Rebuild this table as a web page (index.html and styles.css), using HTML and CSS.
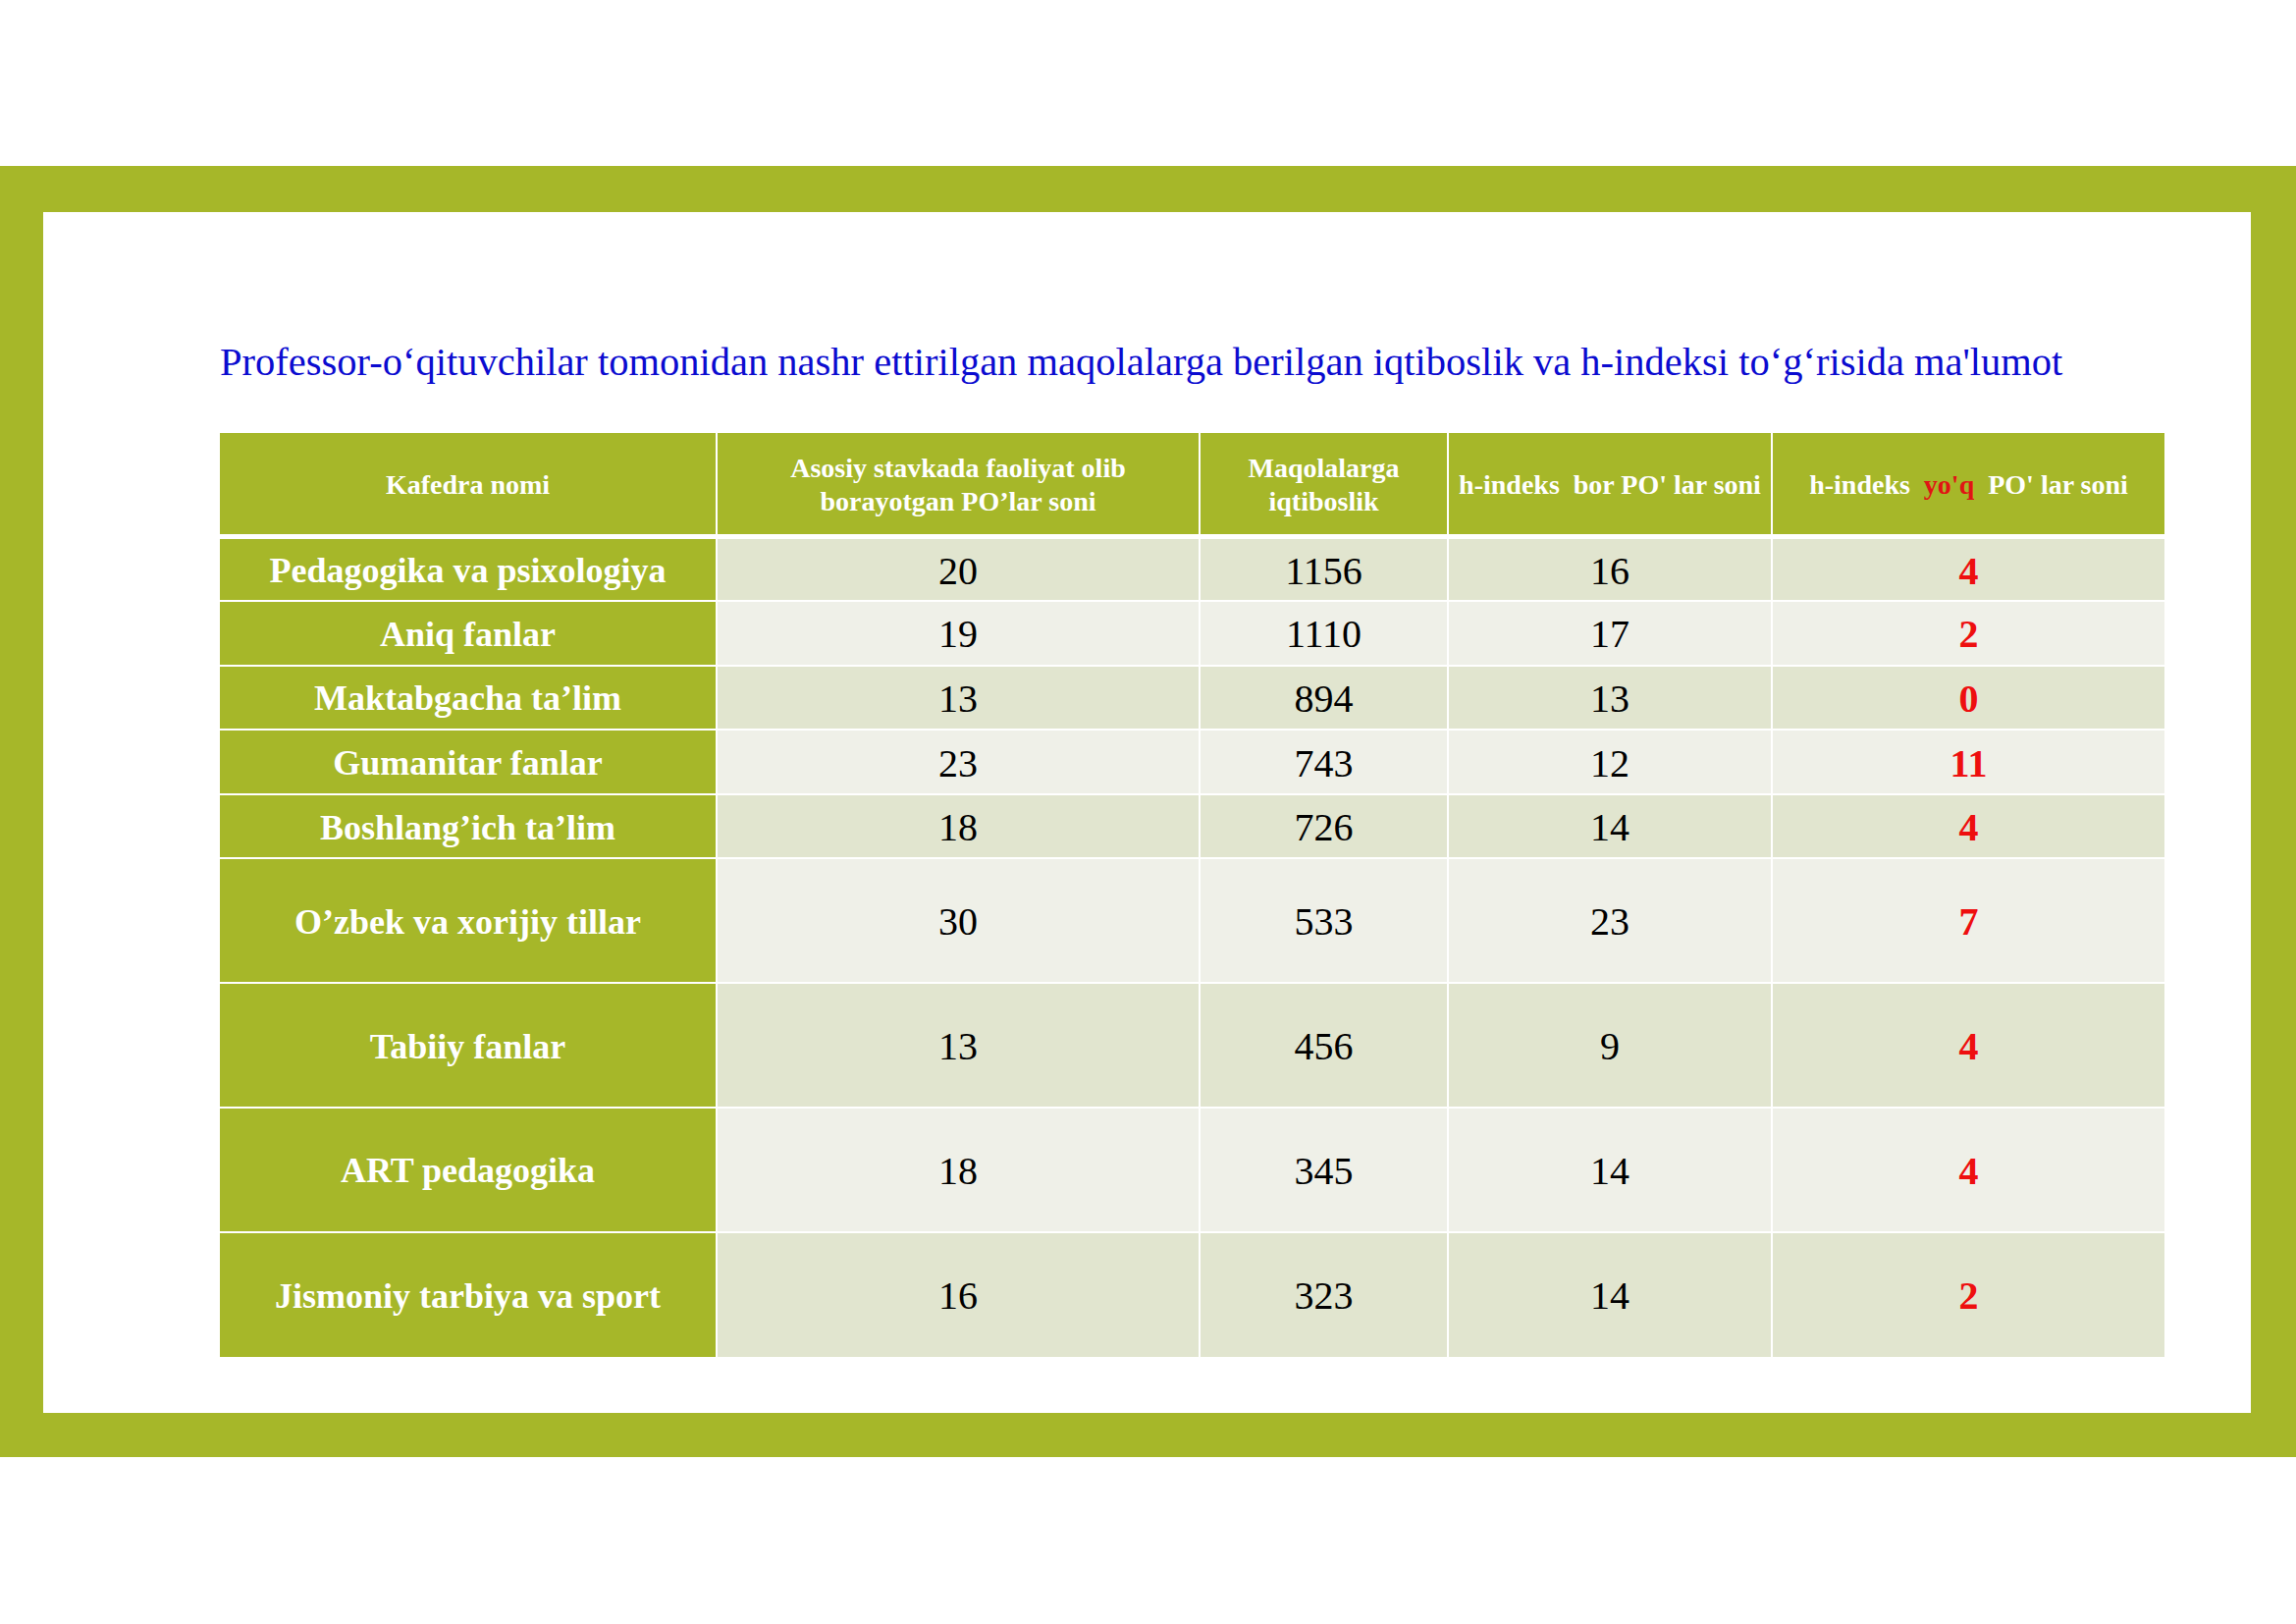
FILE: index.html
```html
<!DOCTYPE html>
<html lang="uz">
<head>
<meta charset="utf-8">
<title>Iqtiboslik va h-indeks</title>
<link rel="stylesheet" href="styles.css">
</head>
<body>
<div class="page">
  <div class="frame">
    <div class="sheet">
      <h1 class="title">Professor-o‘qituvchilar tomonidan nashr ettirilgan maqolalarga berilgan iqtiboslik va h-indeksi to‘g‘risida ma'lumot</h1>
      <table class="data">
        <colgroup>
          <col class="c1"><col class="c2"><col class="c3"><col class="c4"><col class="c5">
        </colgroup>
        <thead>
          <tr class="head">
            <th>Kafedra nomi</th>
            <th>Asosiy stavkada faoliyat olib<br>borayotgan PO’lar soni</th>
            <th>Maqolalarga<br>iqtiboslik</th>
            <th>h-indeks&nbsp; bor PO' lar soni</th>
            <th>h-indeks&nbsp; <span class="red">yo'q</span>&nbsp; PO' lar soni</th>
          </tr>
        </thead>
        <tbody>
          <tr class="r short odd"><th>Pedagogika va psixologiya</th><td>20</td><td>1156</td><td>16</td><td class="neg">4</td></tr>
          <tr class="r short even"><th>Aniq fanlar</th><td>19</td><td>1110</td><td>17</td><td class="neg">2</td></tr>
          <tr class="r short odd"><th>Maktabgacha ta’lim</th><td>13</td><td>894</td><td>13</td><td class="neg">0</td></tr>
          <tr class="r short even"><th>Gumanitar fanlar</th><td>23</td><td>743</td><td>12</td><td class="neg">11</td></tr>
          <tr class="r short odd"><th>Boshlang’ich ta’lim</th><td>18</td><td>726</td><td>14</td><td class="neg">4</td></tr>
          <tr class="r tall even"><th>O’zbek va xorijiy tillar</th><td>30</td><td>533</td><td>23</td><td class="neg">7</td></tr>
          <tr class="r tall odd"><th>Tabiiy fanlar</th><td>13</td><td>456</td><td>9</td><td class="neg">4</td></tr>
          <tr class="r tall even"><th>ART pedagogika</th><td>18</td><td>345</td><td>14</td><td class="neg">4</td></tr>
          <tr class="r tall odd"><th>Jismoniy tarbiya va sport</th><td>16</td><td>323</td><td>14</td><td class="neg">2</td></tr>
        </tbody>
      </table>
    </div>
  </div>
</div>
</body>
</html>
```

FILE: styles.css
```css
html, body {
  margin: 0;
  padding: 0;
  background: #ffffff;
}

.page {
  width: 2339px;
  height: 1654px;
  padding-top: 169px;
  box-sizing: border-box;
  font-family: "Liberation Serif", "Times New Roman", serif;
}

.frame {
  background: #a6b729;
  padding: 47px 46px 45px 44px;
}

.sheet {
  background: #ffffff;
  height: 1223px;
  padding: 129px 0 0 180px;
  box-sizing: border-box;
}

.title {
  margin: 0;
  font-weight: normal;
  font-size: 40.5px;
  line-height: 48px;
  color: #0b0bd0;
  white-space: nowrap;
}

.data {
  margin-top: 48px;
  width: 1981px;
  table-layout: fixed;
  border-collapse: collapse;
  border-style: hidden;
}

.c1 { width: 506px; }
.c2 { width: 492px; }
.c3 { width: 253px; }
.c4 { width: 330px; }
.c5 { width: 400px; }

.data th,
.data td {
  border: 2px solid #ffffff;
  padding: 0;
  text-align: center;
  vertical-align: middle;
}

.head th {
  background: #a6b729;
  color: #ffffff;
  font-weight: bold;
  font-size: 28px;
  line-height: 34px;
  height: 100px;
  padding-top: 3px;
  border-bottom-width: 5px;
}

.r th {
  background: #a6b729;
  color: #ffffff;
  font-weight: bold;
  font-size: 36px;
  padding-top: 2px;
}

.r td {
  font-size: 40px;
  color: #000000;
  padding-top: 2px;
}

.odd td { background: #e1e5cf; }
.even td { background: #eff0e8; }

.short { height: 65.6px; }
.tall { height: 126.8px; }

.red {
  color: #e01414;
}

.data td.neg {
  color: #ee0f0f;
  font-weight: bold;
}
```
